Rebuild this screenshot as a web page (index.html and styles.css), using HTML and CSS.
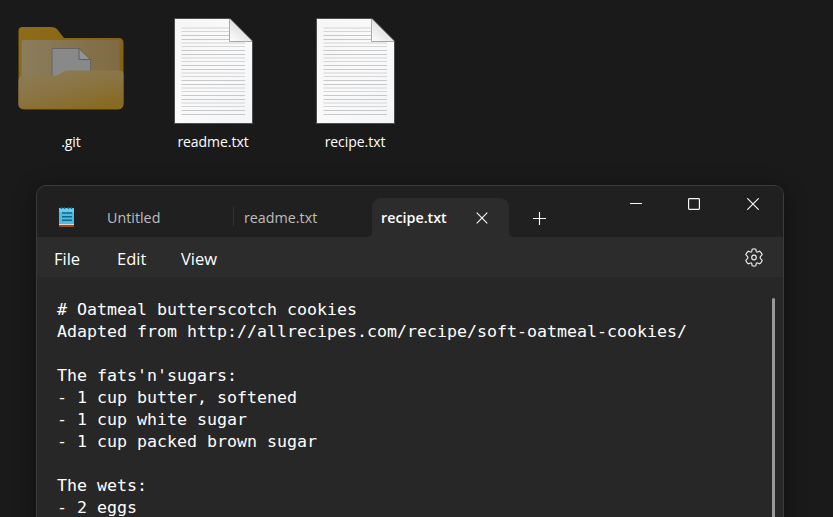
FILE: index.html
```html
<!DOCTYPE html>
<html lang="en">
<head>
<meta charset="utf-8">
<title>recipe.txt</title>
<link rel="stylesheet" href="styles.css">
</head>
<body>
<svg class="defs" width="0" height="0" aria-hidden="true">
  <defs>
    <linearGradient id="paper" x1="0" y1="0" x2="1" y2="1"><stop offset="0" stop-color="#f6f6f7"/><stop offset=".5" stop-color="#fafafb"/><stop offset="1" stop-color="#f4f5f7"/></linearGradient>
    <linearGradient id="fold" x1="0" y1="1" x2=".8" y2="0"><stop offset="0" stop-color="#fff"/><stop offset="1" stop-color="#cfcfcf"/></linearGradient>
    <pattern id="rules" width="64" height="15" patternUnits="userSpaceOnUse" x="7.5" y="9">
      <path d="M0 1h64" stroke="#e4e6e7" stroke-width="2"/>
      <path d="M0 4.5h64" stroke="#d4d6d7"/>
      <path d="M0 8.5h64M0 12.5h64" stroke="#c6c8c9"/>
    </pattern>
    <symbol id="document" viewBox="0 0 79 106">
      <path d="M.5 .5H56L78.500 23V105.500H.5z" fill="url(#paper)" stroke="#4b4e4e"/>
      <path d="M7.500 9H55.500V24H71V98H7.500z" fill="url(#rules)"/>
      <path d="M55.500 1v23H78z" fill="url(#fold)"/>
      <path d="M55.500 1v22.500H78" fill="none" stroke="#a7a9aa"/>
    </symbol>
  </defs>
</svg>
<main class="desktop">
  <div class="files">
    <div class="file">
      <svg class="picture" width="106" height="106" viewBox="0 0 106 106">
        <defs>
          <linearGradient id="back" x1="0" y1="0" x2="1" y2="1"><stop offset="0" stop-color="#8f6c18"/><stop offset="1" stop-color="#7c5e17"/></linearGradient>
          <linearGradient id="front" x1="0" y1="0" x2=".65" y2="1"><stop offset="0" stop-color="#8c7d55"/><stop offset=".5" stop-color="#8a7546"/><stop offset="1" stop-color="#886b23"/></linearGradient>
          <linearGradient id="inner" x1="0" y1="0" x2="1" y2="0"><stop offset="0" stop-color="#8b7d5b"/><stop offset="1" stop-color="#806b43"/></linearGradient>
        </defs>
        <path d="M.5 13q0-4 4-4H33q4 0 6 2l7 9h54.500q5 0 5 5V84q0 7-5 7H5.500q-5 0-5-5z" fill="url(#back)"/>
        <rect x="3.500" y="22" width="98" height="50" rx="2" fill="url(#inner)"/>
        <path d="M34 30.500h27l11.500 11V66H34z" fill="#898989" stroke="#666"/>
        <path d="M61 30.500V41.500h11.500z" fill="#939393" stroke="#5e5e5e"/>
        <path d="M.5 63q0-5 5-5H34q5 0 8-2l2-1.500q3-2 7-2h50q4.500 0 4.500 4V86q0 5-5 5H5.500q-5 0-5-5z" fill="url(#front)"/>
        <path d="M2 89q1 2 4 2h94q3 0 4-2" fill="none" stroke="#8a6516"/>
      </svg>
      <span class="name">.git</span>
    </div>
    <div class="file">
      <svg class="picture" width="79" height="106"><use href="#document"/></svg>
      <span class="name">readme.txt</span>
    </div>
    <div class="file">
      <svg class="picture" width="79" height="106"><use href="#document"/></svg>
      <span class="name">recipe.txt</span>
    </div>
  </div>
  <section class="window">
    <header class="titlebar">
      <svg class="app" width="16" height="20" viewBox="0 0 16 20">
        <path d="M0 15h15v5H0z" fill="#9a4a12"/>
        <path d="M0 16h15v2H0z" fill="#dedbd5"/>
        <path d="M0 1h15v16H0z" fill="#50b9dc"/>
        <path d="M0 1h15v4H0z" fill="#69cbe8"/>
        <path d="M2.500 0v2M5.500 0v2M9.500 0v2M12.500 0v2" stroke="#0d6285" stroke-width="1.500"/>
        <path d="M3 6h10M3 9.700h10M3 13.300h10" stroke="#0b6790" stroke-width="1.600"/>
      </svg>
      <div class="tab tab-first">Untitled</div>
      <div class="tab tab-second">readme.txt</div>
      <div class="tab tab-active"><span>recipe.txt</span>
        <svg class="line-icon" width="12" height="12" viewBox="0 0 12 12"><path d="M.7 .7l10.600 10.600M11.300 .7L.7 11.300"/></svg>
      </div>
      <svg class="plus line-icon" width="13" height="13" viewBox="0 0 13 13"><path d="M6.500 0v13M0 6.500h13"/></svg>
      <div class="controls">
        <svg class="line-icon" width="12" height="12" viewBox="0 0 12 12"><path d="M0 5.500h12"/></svg>
        <svg class="line-icon" width="12" height="12" viewBox="0 0 12 12"><rect x=".6" y=".6" width="10.800" height="10.800" rx=".8"/></svg>
        <svg class="line-icon" width="12" height="12" viewBox="0 0 12 12"><path d="M.3 .3l11.400 11.400M11.700 .3L.3 11.700"/></svg>
      </div>
    </header>
    <nav class="menu">
      <span class="file-menu">File</span><span class="edit-menu">Edit</span><span class="view-menu">View</span>
      <svg class="gear" width="18" height="19" viewBox="0 0 18 19">
        <path d="M7.200 1.200Q9 .5 10.800 1.200L11.300 3.500Q11.500 4.300 12.500 4L14.700 3.200Q16.600 4.600 17.200 6.700L15.600 8.300Q14.700 9.500 15.600 10.700L17.200 12.300Q16.600 14.400 14.700 15.800L12.500 15Q11.500 14.700 11.300 15.500L10.800 17.800Q9 18.500 7.200 17.800L6.700 15.500Q6.500 14.700 5.500 15L3.300 15.800Q1.400 14.400 .8 12.300L2.400 10.700Q3.300 9.500 2.400 8.300L.8 6.700Q1.400 4.600 3.300 3.200L5.500 4Q6.500 4.300 6.700 3.500z"/>
        <circle cx="9" cy="9.500" r="2.300"/>
      </svg>
    </nav>
    <div class="editor">
<pre># Oatmeal butterscotch cookies
Adapted from http://allrecipes.com/recipe/soft-oatmeal-cookies/

The fats'n'sugars:
- 1 cup butter, softened
- 1 cup white sugar
- 1 cup packed brown sugar

The wets:
- 2 eggs</pre>
      <div class="scrollbar"></div>
    </div>
  </section>
</main>
</body>
</html>
```
FILE: styles.css
```css
* { box-sizing: border-box; }
body {
  margin: 0;
  background: #1a1a1a;
  color: #fff;
  font-family: "Open Sans", "Noto Sans", sans-serif;
}
svg { display: block; flex: none; }
.defs { position: absolute; }
.desktop {
  height: 517px;
  overflow: hidden;
  display: flex;
  flex-direction: column;
}
.files {
  display: flex;
  height: 185px;
  flex: none;
  padding-top: 18px;
}
.file {
  width: 142px;
  display: flex;
  flex-direction: column;
  align-items: center;
}
.name {
  margin-top: 8px;
  font-size: 14px;
  line-height: 20px;
  letter-spacing: -.05px;
}
.window {
  width: 748px;
  height: 400px;
  flex: none;
  margin-left: 36px;
  border: 1px solid #3b3b3b;
  border-radius: 10px;
  background: #272727;
  box-shadow: 0 5px 22px rgba(0, 0, 0, .45);
  overflow: hidden;
}
.titlebar {
  display: flex;
  height: 51px;
  background: #202020;
}
.app { margin: 21px 0 0 22px; }
.tab {
  height: 39px;
  margin-top: 12px;
  line-height: 39px;
  font-size: 14.3px;
  color: #bdbdbd;
}
.tab-first { margin-left: 32px; width: 137px; }
.tab-second { width: 128px; }
.tab-second::before {
  content: "";
  float: left;
  width: 1px;
  height: 19px;
  margin: 9px 0 0 -11px;
  background: #333;
}
.tab-active {
  position: relative;
  display: flex;
  align-items: center;
  justify-content: space-between;
  width: 137px;
  padding: 0 21px 0 9px;
  border-radius: 9px 9px 0 0;
  background: #2c2c2c;
  color: #fff;
  font-weight: 600;
}
.tab-active::before,
.tab-active::after {
  content: "";
  position: absolute;
  bottom: 0;
  width: 4px;
  height: 4px;
}
.tab-active::before {
  left: -4px;
  background: radial-gradient(circle at 0 0, transparent 3.500px, #2c2c2c 4px);
}
.tab-active::after {
  right: -4px;
  background: radial-gradient(circle at 100% 0, transparent 3.500px, #2c2c2c 4px);
}
.line-icon {
  fill: none;
  stroke: #f5f5f5;
  stroke-width: 1.150;
}
.plus { margin: 26px 0 0 24px; }
.controls {
  display: flex;
  gap: 47px;
  margin: 12px 24px 0 auto;
}
.controls svg:first-child { margin-right: -1px; }
.menu {
  display: flex;
  height: 40px;
  line-height: 43px;
  padding: 0 20px 0 17px;
  background: #2c2c2c;
  font-size: 16.500px;
}
.file-menu { width: 63px; }
.edit-menu { width: 64px; }
.gear {
  margin: 11px 0 0 auto;
  fill: none;
  stroke: #e8e8e8;
  stroke-width: 1.200;
}
.editor {
  display: flex;
  justify-content: space-between;
  padding: 21px 8px 0 20px;
}
pre {
  margin: 1px 0 0;
  font: 16.610px/22px "DejaVu Sans Mono", monospace;
}
.scrollbar {
  width: 3px;
  height: 300px;
  border-radius: 2px;
  background: #999;
}
```
